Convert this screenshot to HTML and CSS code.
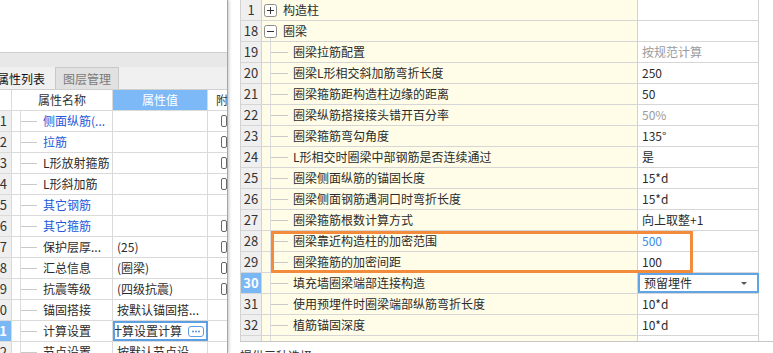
FILE: index.html
```html
<!DOCTYPE html>
<html lang="zh-CN">
<head>
<meta charset="utf-8">
<title>圈梁属性</title>
<link rel="stylesheet" href="styles.css">
</head>
<body>
<div class="app">
  <section class="left">
    <div class="lp-top"></div>
    <div class="lp-band"></div>
    <div class="tabs">
      <div class="tab active">属性列表</div>
      <div class="tab">图层管理</div>
    </div>
    <div class="lgrid">
      <div class="lrow lhead">
        <div class="lnum"></div>
        <div class="lh">属性名称</div>
        <div class="lh hl">属性值</div>
        <div class="lh att">附</div>
      </div>
      <div class="lrow"><div class="lnum"><span>11</span></div><div class="lname tree blue">侧面纵筋(...</div><div class="lval"></div><div class="latt"><i class="cb"></i></div></div>
      <div class="lrow"><div class="lnum"><span>12</span></div><div class="lname tree blue">拉筋</div><div class="lval"></div><div class="latt"><i class="cb"></i></div></div>
      <div class="lrow"><div class="lnum"><span>13</span></div><div class="lname tree">L形放射箍筋</div><div class="lval"></div><div class="latt"><i class="cb"></i></div></div>
      <div class="lrow"><div class="lnum"><span>14</span></div><div class="lname tree">L形斜加筋</div><div class="lval"></div><div class="latt"><i class="cb"></i></div></div>
      <div class="lrow"><div class="lnum"><span>15</span></div><div class="lname tree blue">其它钢筋</div><div class="lval"></div><div class="latt"></div></div>
      <div class="lrow"><div class="lnum"><span>16</span></div><div class="lname tree blue">其它箍筋</div><div class="lval"></div><div class="latt"><i class="cb"></i></div></div>
      <div class="lrow"><div class="lnum"><span>17</span></div><div class="lname tree">保护层厚...</div><div class="lval">(25)</div><div class="latt"><i class="cb"></i></div></div>
      <div class="lrow"><div class="lnum"><span>18</span></div><div class="lname tree">汇总信息</div><div class="lval">(圈梁)</div><div class="latt"><i class="cb"></i></div></div>
      <div class="lrow"><div class="lnum"><span>19</span></div><div class="lname tree">抗震等级</div><div class="lval">(四级抗震)</div><div class="latt"><i class="cb"></i></div></div>
      <div class="lrow"><div class="lnum"><span>20</span></div><div class="lname tree">锚固搭接</div><div class="lval">按默认锚固搭...</div><div class="latt"></div></div>
      <div class="lrow"><div class="lnum sel"><span>21</span></div><div class="lname tree">计算设置</div><div class="lval edit"><span class="etext">计算设置计算</span><span class="dots"><svg width="14" height="9" viewBox="0 0 14 9"><circle cx="4" cy="4.5" r="0.9" fill="#3f86d8"/><circle cx="7" cy="4.5" r="0.9" fill="#3f86d8"/><circle cx="10" cy="4.5" r="0.9" fill="#3f86d8"/></svg></span></div><div class="latt"></div></div>
      <div class="lrow"><div class="lnum"><span>22</span></div><div class="lname tree">节点设置</div><div class="lval">按默认节点设...</div><div class="latt"></div></div>
    </div>
  </section>

  <section class="right">
    <div class="gview">
      <div class="tbl">
        <div class="row"><div class="num">1</div><div class="name grp"><svg class="tg" width="13" height="13" viewBox="0 0 13 13"><rect x="0.5" y="0.5" width="12" height="12" rx="2" fill="#fff" stroke="#8c8c8c"/><path d="M3 6.5h7M6.5 3v7" stroke="#333"/></svg><span>构造柱</span></div><div class="val"></div></div>
        <div class="row"><div class="num">18</div><div class="name grp open"><svg class="tg" width="13" height="13" viewBox="0 0 13 13"><rect x="0.5" y="0.5" width="12" height="12" rx="2" fill="#fff" stroke="#8c8c8c"/><path d="M3 6.5h7" stroke="#333"/></svg><span>圈梁</span></div><div class="val"></div></div>
        <div class="row"><div class="num">19</div><div class="name tree">圈梁拉筋配置</div><div class="val muted">按规范计算</div></div>
        <div class="row"><div class="num">20</div><div class="name tree">圈梁L形相交斜加筋弯折长度</div><div class="val">250</div></div>
        <div class="row"><div class="num">21</div><div class="name tree">圈梁箍筋距构造柱边缘的距离</div><div class="val">50</div></div>
        <div class="row"><div class="num">22</div><div class="name tree">圈梁纵筋搭接接头错开百分率</div><div class="val muted">50%</div></div>
        <div class="row"><div class="num">23</div><div class="name tree">圈梁箍筋弯勾角度</div><div class="val">135°</div></div>
        <div class="row"><div class="num">24</div><div class="name tree">L形相交时圈梁中部钢筋是否连续通过</div><div class="val">是</div></div>
        <div class="row"><div class="num">25</div><div class="name tree">圈梁侧面纵筋的锚固长度</div><div class="val">15*d</div></div>
        <div class="row"><div class="num">26</div><div class="name tree">圈梁侧面钢筋遇洞口时弯折长度</div><div class="val">15*d</div></div>
        <div class="row"><div class="num">27</div><div class="name tree">圈梁箍筋根数计算方式</div><div class="val">向上取整+1</div></div>
        <div class="row"><div class="num">28</div><div class="name tree">圈梁靠近构造柱的加密范围</div><div class="val link">500</div></div>
        <div class="row"><div class="num">29</div><div class="name tree">圈梁箍筋的加密间距</div><div class="val">100</div></div>
        <div class="row"><div class="num sel">30</div><div class="name tree">填充墙圈梁端部连接构造</div><div class="val combo"><span>预留埋件</span><i class="caret"></i></div></div>
        <div class="row"><div class="num">31</div><div class="name tree">使用预埋件时圈梁端部纵筋弯折长度</div><div class="val">10*d</div></div>
        <div class="row"><div class="num">32</div><div class="name tree">植筋锚固深度</div><div class="val">10*d</div></div>
        <div class="row"><div class="num"></div><div class="name tree"></div><div class="val"></div></div>
      </div>
      <div class="mark"></div>
    </div>
    <div class="foot">提供三种选择</div>
  </section>
</div>
</body>
</html>
```

FILE: styles.css
```css
* { box-sizing: border-box; }

html, body {
  margin: 0;
  padding: 0;
}

body {
  width: 773px;
  height: 353px;
  overflow: hidden;
  background: #fff;
  color: #2b2b2b;
  font-family: "Noto Sans CJK SC", "Microsoft YaHei", sans-serif;
  font-size: 12px;
}

.app {
  display: flex;
  height: 353px;
}

/* ---------- left panel ---------- */
.left {
  width: 228px;
  flex: none;
  display: flex;
  flex-direction: column;
  overflow: hidden;
  border-right: 1px solid #a6a6a6;
  box-shadow: 1px 0 3px rgba(0, 0, 0, 0.22);
  position: relative;
  z-index: 1;
  background: #fff;
}

.lp-top {
  height: 53px;
  flex: none;
  border-bottom: 1px solid #cfcfcf;
}

.lp-band {
  height: 14px;
  flex: none;
  background: #e8e8e8;
}

.tabs {
  height: 23px;
  flex: none;
  display: flex;
  align-items: flex-end;
  background: #f0f0f0;
  border-bottom: 1px solid #cfcfcf;
}

.tab {
  height: 22px;
  display: flex;
  align-items: center;
  justify-content: center;
  white-space: nowrap;
  overflow: hidden;
}

.tab.active {
  width: 53px;
  justify-content: flex-end;
  padding-right: 8px;
  color: #111;
}

.tab:not(.active) {
  width: 64px;
  margin-left: 2px;
  background: #e1e1e1;
  border: 1px solid #c9c9c9;
  border-bottom: none;
  color: #7a7a7a;
}

.lrow {
  display: grid;
  grid-template-columns: 12px 101px 95px 1fr;
  height: 21px;
  border-bottom: 1px solid #dadada;
  line-height: 20px;
  white-space: nowrap;
}

.lrow > div {
  overflow: hidden;
  border-right: 1px solid #dadada;
}

.lrow > div:last-child { border-right: none; }

.lnum {
  display: flex;
  justify-content: flex-end;
  padding-right: 4px;
  background: #efefef;
  font-size: 13px;
  color: #333;
}

.lnum.sel {
  background: #7ab8f5;
  color: #fff;
  font-weight: bold;
}

.lhead .lnum { background: #fff; }

.lh {
  text-align: center;
  color: #333;
}

.lh.hl {
  background: #7db9f6;
  color: #fff;
}

.lh.att {
  text-align: left;
  padding-left: 8px;
}

.tree {
  padding-left: 31px;
  background:
    linear-gradient(#dcdcdc, #dcdcdc) no-repeat 8px 0 / 1px 100%,
    linear-gradient(#c9c9c9, #c9c9c9) no-repeat 9px 10px / 16px 1px;
}

.lname { color: #2b2b2b; }
.lname.blue { color: #2458d9; }

.lval {
  padding-left: 4px;
}

.lval.edit {
  display: flex;
  align-items: center;
  padding: 0 3px 0 2px;
  outline: 2px solid #5d9fe3;
  outline-offset: -2px;
}

.etext {
  flex: 1;
  min-width: 0;
  display: flex;
  justify-content: flex-end;
  overflow: hidden;
  margin-right: 6px;
}

.dots {
  flex: none;
  width: 16px;
  height: 11px;
  border: 1px solid #5d9fe3;
  border-radius: 3px;
  display: flex;
  align-items: center;
  justify-content: center;
  background: #fff;
}

.latt {
  display: flex;
  align-items: center;
}

.cb {
  display: block;
  width: 12px;
  height: 12px;
  margin-left: 13px;
  border: 1px solid #666;
  border-radius: 2px;
  background: #fff;
}

/* ---------- right panel ---------- */
.right {
  flex: 1;
  min-width: 0;
  padding-left: 12px;
  background: #fff;
}

.gview {
  position: relative;
  height: 342px;
  overflow: hidden;
  border-bottom: 1px solid #c6c6c6;
}

.tbl {
  width: 519px;
  border-left: 1px solid #d2d2d2;
}

.row {
  display: grid;
  grid-template-columns: 21px 376px 121px;
  height: 21px;
  border-bottom: 1px solid #d6d6d6;
  line-height: 20px;
  white-space: nowrap;
}

.row > div {
  border-right: 1px solid #d2d2d2;
  overflow: hidden;
}

.num {
  background: #efefef;
  text-align: center;
  font-size: 13px;
  color: #333;
}

.num.sel {
  background: #7ab8f5;
  color: #fff;
  font-weight: bold;
}

.name {
  background-color: #fffde8;
  color: #2b2b2b;
}

.name.tree {
  background:
    linear-gradient(#dcdcdc, #dcdcdc) no-repeat 8px 0 / 1px 100%,
    linear-gradient(#c9c9c9, #c9c9c9) no-repeat 9px 10px / 17px 1px,
    #fffde8;
}

.name.grp {
  display: flex;
  align-items: center;
  padding-left: 2px;
}

.name.grp.open {
  background:
    linear-gradient(#dcdcdc, #dcdcdc) no-repeat 8px 16px / 1px 4px,
    #fffde8;
}

.tg {
  display: block;
  flex: none;
  margin-right: 6px;
}

.val {
  padding-left: 4px;
  color: #2b2b2b;
}

.val.muted { color: #9b9b9b; }
.val.link { color: #3a8ce6; }

.val.combo {
  display: flex;
  align-items: center;
  justify-content: space-between;
  padding: 0 11px 0 6px;
  outline: 2px solid #62a5e6;
  outline-offset: -2px;
}

.caret {
  display: block;
  width: 0;
  height: 0;
  border-left: 3px solid transparent;
  border-right: 3px solid transparent;
  border-top: 3px solid #555;
}

.mark {
  position: absolute;
  left: 31px;
  top: 231px;
  width: 422px;
  height: 42px;
  border: 3px solid #f28c3c;
}

.foot {
  padding-top: 4px;
  line-height: 20px;
  color: #333;
}
```
